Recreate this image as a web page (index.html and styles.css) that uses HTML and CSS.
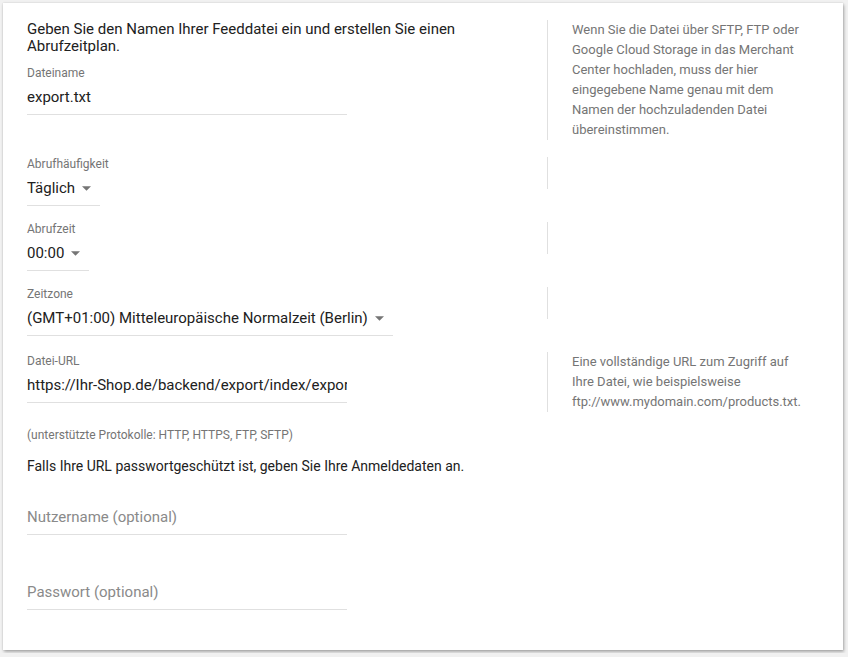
FILE: index.html
```html
<!DOCTYPE html>
<html lang="de">
<head>
<meta charset="utf-8">
<title>Feeddatei</title>
<link rel="stylesheet" href="styles.css">
</head>
<body>
<div class="card">
  <div class="row row-first">
    <div class="main">
      <p class="intro">Geben Sie den Namen Ihrer Feeddatei ein und erstellen Sie einen Abrufzeitplan.</p>
      <div class="field field-wide">
        <div class="label">Dateiname</div>
        <div class="value">export.txt</div>
      </div>
    </div>
    <div class="help"><p class="help-text">Wenn Sie die Datei über SFTP, FTP oder Google Cloud Storage in das Merchant Center hochladen, muss der hier eingegebene Name genau mit dem Namen der hochzuladenden Datei übereinstimmen.</p></div>
  </div>

  <div class="row">
    <div class="main">
      <div class="field">
        <div class="label">Abrufhäufigkeit</div>
        <div class="value select">Täglich<svg class="arrow" viewBox="0 0 10 5" width="9" height="5"><path d="M0 0h10L5 5z"/></svg></div>
      </div>
    </div>
    <div class="help help-empty"></div>
  </div>

  <div class="row">
    <div class="main">
      <div class="field">
        <div class="label">Abrufzeit</div>
        <div class="value select">00:00<svg class="arrow" viewBox="0 0 10 5" width="9" height="5"><path d="M0 0h10L5 5z"/></svg></div>
      </div>
    </div>
    <div class="help help-empty"></div>
  </div>

  <div class="row">
    <div class="main">
      <div class="field">
        <div class="label">Zeitzone</div>
        <div class="value select">(GMT+01:00) Mitteleuropäische Normalzeit (Berlin)<svg class="arrow" viewBox="0 0 10 5" width="9" height="5"><path d="M0 0h10L5 5z"/></svg></div>
      </div>
    </div>
    <div class="help help-empty"></div>
  </div>

  <div class="row row-url">
    <div class="main">
      <div class="field field-wide">
        <div class="label">Datei-URL</div>
        <div class="value clip">https://Ihr-Shop.de/backend/export/index/export</div>
      </div>
    </div>
    <div class="help"><p class="help-text">Eine vollständige URL zum Zugriff auf Ihre Datei, wie beispielsweise ftp://www.mydomain.com/products.txt.</p></div>
  </div>

  <p class="hint">(unterstützte Protokolle: HTTP, HTTPS, FTP, SFTP)</p>
  <p class="note">Falls Ihre URL passwortgeschützt ist, geben Sie Ihre Anmeldedaten an.</p>

  <div class="field field-wide field-user">
    <div class="value placeholder">Nutzername (optional)</div>
  </div>
  <div class="field field-wide field-pass">
    <div class="value placeholder">Passwort (optional)</div>
  </div>
</div>
</body>
</html>
```

FILE: styles.css
```css
* { box-sizing: border-box; }

html, body {
  margin: 0;
  padding: 0;
}

body {
  background: #f1f1f1;
  padding: 3px;
  font-family: Roboto, "Noto Sans", Arial, sans-serif;
  color: #212121;
}

.card {
  width: 840px;
  height: 647px;
  background: #ffffff;
  padding: 17px 24px 0 24px;
  box-shadow: 1px 2px 3px rgba(0, 0, 0, 0.28), 0 0 2px rgba(0, 0, 0, 0.14);
}

p { margin: 0; }

.row {
  display: flex;
  align-items: flex-start;
  margin-top: 14px;
}

.row-first { margin-top: 0; }
.row-first + .row { margin-top: 15px; }
.row-url { margin-top: 16px; }

.main {
  width: 520px;
  flex: none;
}

.help {
  flex: 1;
  border-left: 1px solid #e0e0e0;
  padding-left: 24px;
}

.help-empty {
  height: 32px;
  margin-top: 2px;
}

.help-text {
  width: 236px;
  font-size: 13px;
  line-height: 20px;
  color: #757575;
}

.intro {
  font-size: 15px;
  line-height: 17px;
  color: #212121;
  margin-top: 1px;
}

.field {
  display: flex;
  flex-direction: column;
  align-items: flex-start;
}

.field-wide {
  width: 320px;
  align-items: stretch;
}

.row-first .field { margin-top: 9px; }

.label {
  font-size: 12px;
  line-height: 16px;
  padding-top: 1px;
  color: #757575;
  margin-bottom: 6px;
}

.value {
  font-size: 15px;
  line-height: 20px;
  color: #212121;
  padding-bottom: 7px;
  border-bottom: 1px solid #e0e0e0;
}

.select {
  display: flex;
  align-items: center;
  gap: 7px;
  padding-right: 9px;
  white-space: nowrap;
}

.arrow {
  fill: #757575;
  flex: none;
  margin-top: 1px;
}

.clip {
  white-space: nowrap;
  overflow: hidden;
}

.hint {
  margin-top: 15px;
  font-size: 12px;
  line-height: 16px;
  color: #757575;
}

.note {
  margin-top: 15px;
  font-size: 14px;
  line-height: 17px;
  color: #212121;
}

.placeholder {
  color: #8a8a8a;
}

.field-user { margin-top: 32px; }
.field-pass { margin-top: 47px; }
```
